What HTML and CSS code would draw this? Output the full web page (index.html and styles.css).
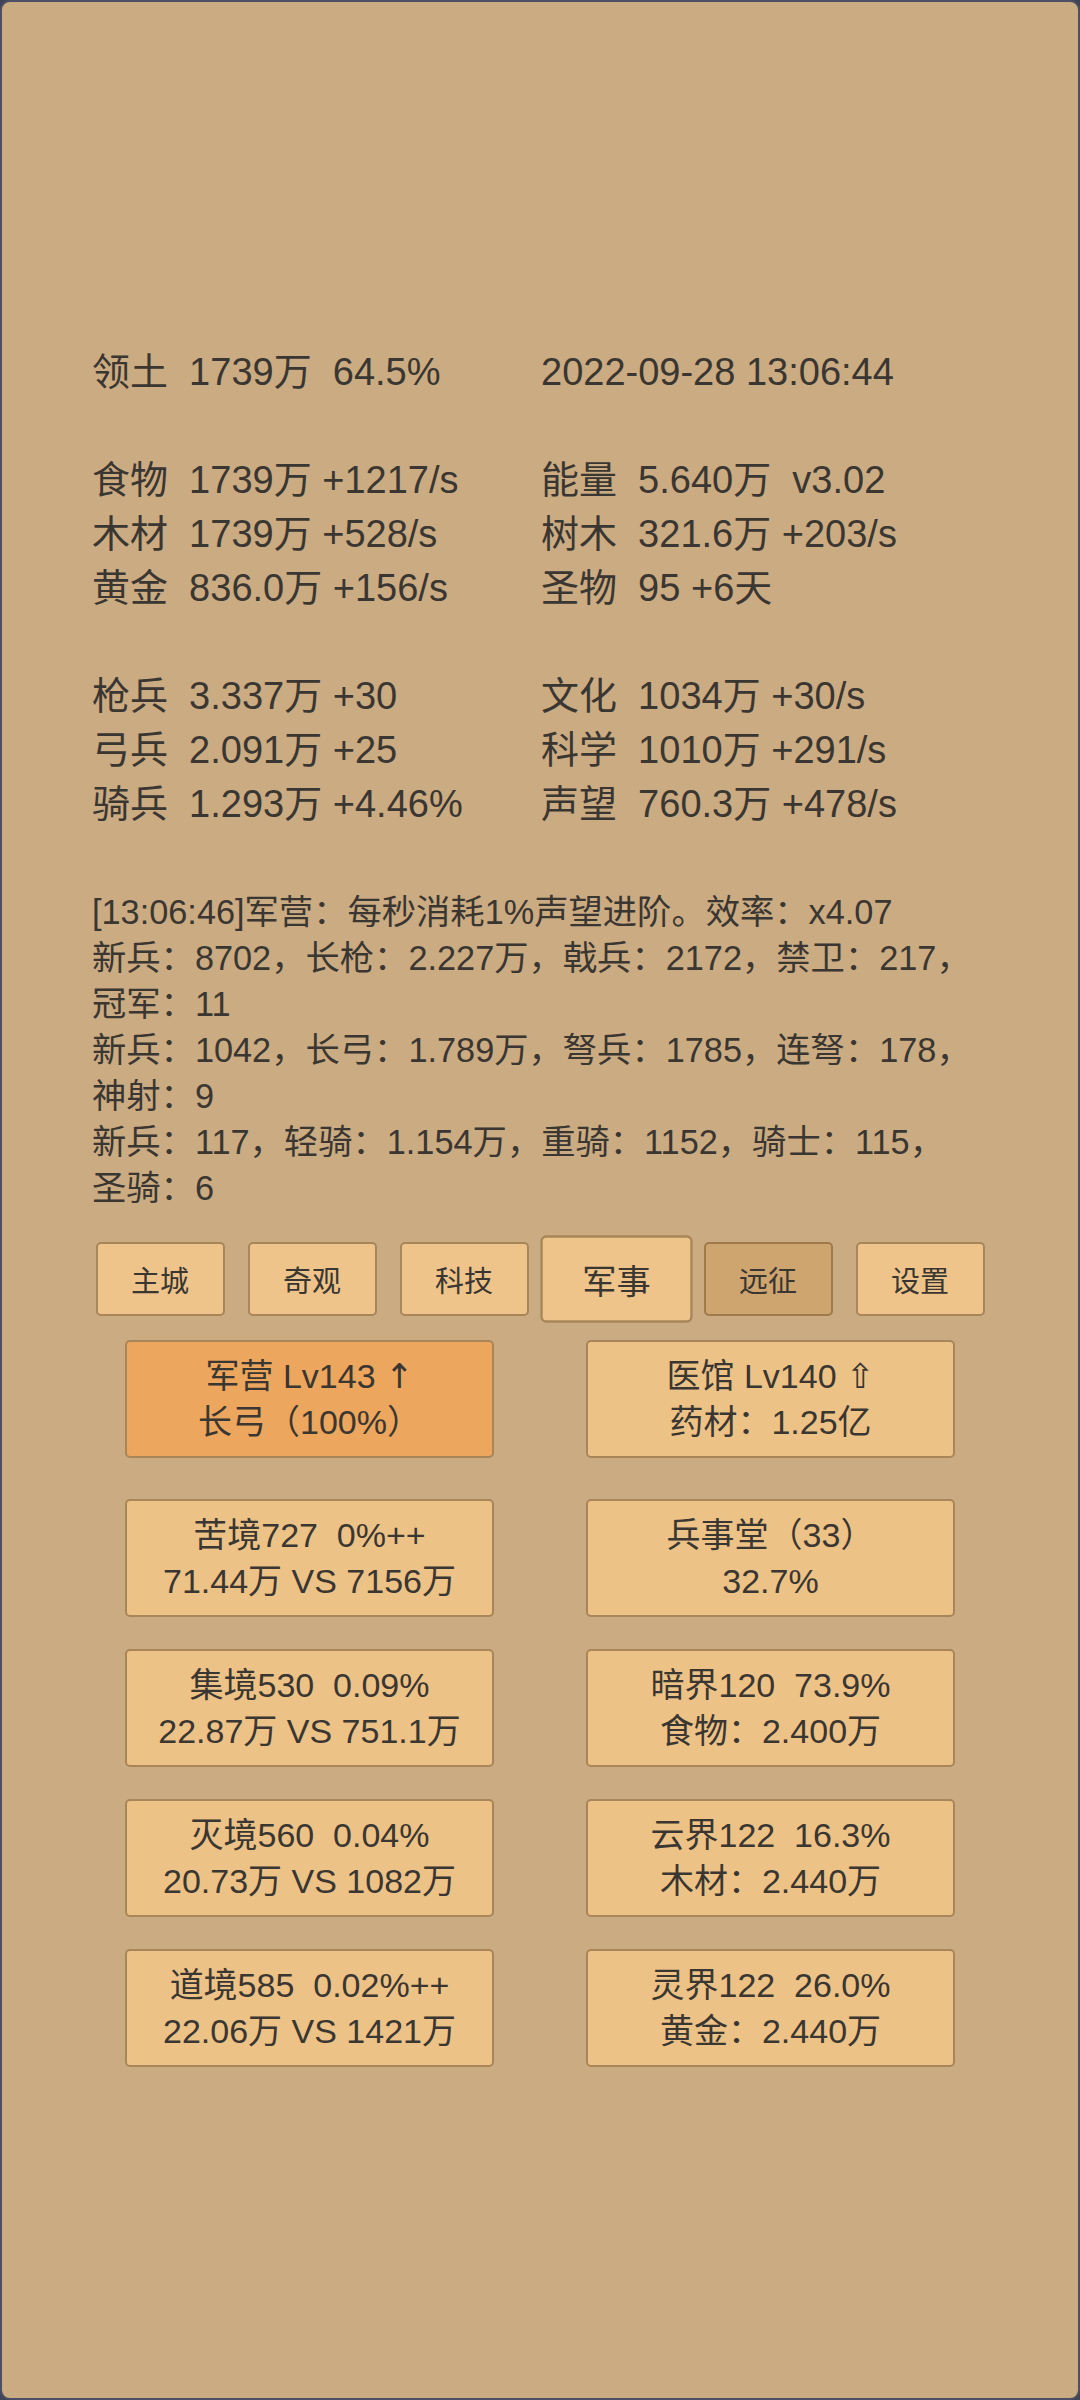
FILE: index.html
```html
<!DOCTYPE html>
<html lang="zh">
<head>
<meta charset="utf-8">
<title>军事</title>
<link rel="stylesheet" href="styles.css">
</head>
<body>
<div class="frame">
  <div class="stats">
    <div class="cell">领土  1739万  64.5%</div><div class="cell">2022-09-28 13:06:44</div>
    <div class="blank"></div>
    <div class="cell">食物  1739万 +1217/s</div><div class="cell">能量  5.640万  v3.02</div>
    <div class="cell">木材  1739万 +528/s</div><div class="cell">树木  321.6万 +203/s</div>
    <div class="cell">黄金  836.0万 +156/s</div><div class="cell">圣物  95 +6天</div>
    <div class="blank"></div>
    <div class="cell">枪兵  3.337万 +30</div><div class="cell">文化  1034万 +30/s</div>
    <div class="cell">弓兵  2.091万 +25</div><div class="cell">科学  1010万 +291/s</div>
    <div class="cell">骑兵  1.293万 +4.46%</div><div class="cell">声望  760.3万 +478/s</div>
  </div>

  <div class="log">
    <p>[13:06:46]军营：每秒消耗1%声望进阶。效率：x4.07</p>
    <p>新兵：8702，长枪：2.227万，戟兵：2172，禁卫：217，<br>冠军：11</p>
    <p>新兵：1042，长弓：1.789万，弩兵：1785，连弩：178，<br>神射：9</p>
    <p>新兵：117，轻骑：1.154万，重骑：1152，骑士：115，<br>圣骑：6</p>
  </div>

  <nav class="tabs">
    <div class="tab">主城</div>
    <div class="tab">奇观</div>
    <div class="tab">科技</div>
    <div class="tab active">军事</div>
    <div class="tab dim">远征</div>
    <div class="tab">设置</div>
  </nav>

  <div class="cards">
    <div class="card hot"><div>军营 Lv143 <span class="arrow">↑</span></div><div>长弓（100%）</div></div>
    <div class="card"><div>医馆 Lv140 <span class="arrow">⇧</span></div><div>药材：1.25亿</div></div>
    <div class="card"><div>苦境727  0%++</div><div>71.44万 VS 7156万</div></div>
    <div class="card"><div>兵事堂（33）</div><div>32.7%</div></div>
    <div class="card"><div>集境530  0.09%</div><div>22.87万 VS 751.1万</div></div>
    <div class="card"><div>暗界120  73.9%</div><div>食物：2.400万</div></div>
    <div class="card"><div>灭境560  0.04%</div><div>20.73万 VS 1082万</div></div>
    <div class="card"><div>云界122  16.3%</div><div>木材：2.440万</div></div>
    <div class="card"><div>道境585  0.02%++</div><div>22.06万 VS 1421万</div></div>
    <div class="card"><div>灵界122  26.0%</div><div>黄金：2.440万</div></div>
  </div>
</div>
</body>
</html>
```

FILE: styles.css
```css
html, body {
  margin: 0;
  padding: 0;
  background: #3f4556;
}

.frame {
  box-sizing: border-box;
  width: 1080px;
  height: 2400px;
  border: 2px solid #4b5163;
  border-radius: 10px;
  background: #cbab82;
  padding-top: 343px;
  color: #3a3631;
  font-family: "Liberation Sans", "Noto Sans CJK SC", sans-serif;
  overflow: hidden;
}

.stats {
  display: grid;
  grid-template-columns: 449px 1fr;
  grid-auto-rows: 54px;
  padding-left: 90px;
  font-size: 38px;
  line-height: 54px;
}

.cell {
  white-space: pre;
}

.blank {
  grid-column: 1 / span 2;
}

.log {
  margin-top: 58px;
  padding-left: 90px;
  font-size: 34.3px;
  line-height: 46px;
}

.log p {
  margin: 0;
}

.tabs {
  margin-top: 31px;
  display: flex;
  justify-content: center;
  gap: 23px;
}

.tab {
  box-sizing: border-box;
  width: 129px;
  height: 74px;
  border: 2px solid #a8865a;
  border-radius: 5px;
  background: #eec48a;
  display: flex;
  align-items: center;
  justify-content: center;
  font-size: 29px;
}

.tab.active {
  transform: scale(1.18);
}

.tab.dim {
  background: #cea46f;
  border-color: #a07a4a;
}

.cards {
  margin-top: 24px;
  display: grid;
  grid-template-columns: 369px 369px;
  column-gap: 92px;
  row-gap: 32px;
  justify-content: center;
}

.cards > :nth-child(-n+2) {
  margin-bottom: 9px;
}

.card {
  box-sizing: border-box;
  height: 118px;
  border: 2px solid #a8865a;
  border-radius: 5px;
  background: #edc287;
  display: flex;
  flex-direction: column;
  align-items: center;
  justify-content: center;
  font-size: 34px;
  line-height: 46px;
  white-space: pre;
}

.card.hot {
  background: #eca65e;
}

.arrow {
  font-family: "DejaVu Sans", sans-serif;
}
```
